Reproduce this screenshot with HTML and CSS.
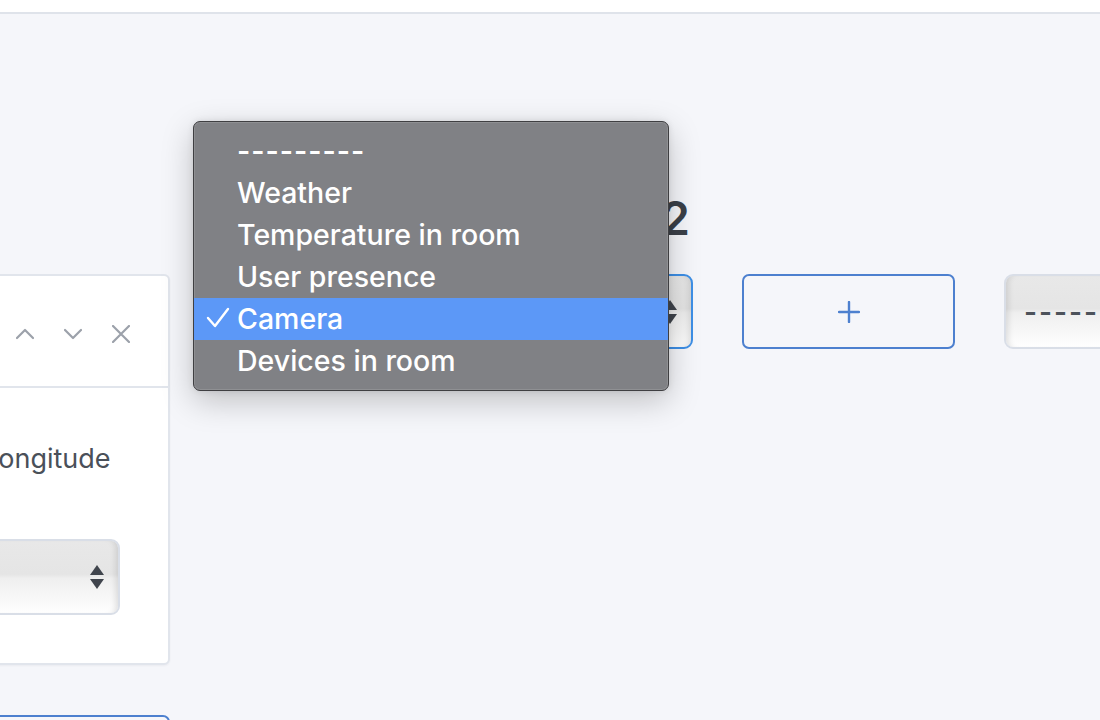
FILE: index.html
```html
<!DOCTYPE html>
<html lang="en">
<head>
<meta charset="utf-8">
<title>Dashboard layout</title>
<link rel="stylesheet" href="styles.css">
</head>
<body>
<header class="topbar"></header>
<main class="canvas">
  <div class="layout">
    <h2 class="col-title col-title-first">Column 1</h2>
    <h2 class="col-title col-title-second">Widget in column 2</h2>
    <div class="spacer"></div>
    <div class="spacer"></div>

    <section class="card">
      <div class="card-head">
        <span class="card-name">Weather</span>
        <div class="card-tools">
          <svg class="tool" viewBox="0 0 18 18" width="18" height="18"><polyline points="1,13 9,5 17,13" fill="none" stroke="currentColor" stroke-width="2.2" stroke-linecap="round" stroke-linejoin="round"/></svg>
          <svg class="tool" viewBox="0 0 18 18" width="18" height="18"><polyline points="1,5 9,13 17,5" fill="none" stroke="currentColor" stroke-width="2.2" stroke-linecap="round" stroke-linejoin="round"/></svg>
          <svg class="tool" viewBox="0 0 18 18" width="18" height="18"><path d="M1 1L17 17M17 1L1 17" fill="none" stroke="currentColor" stroke-width="2.2" stroke-linecap="round"/></svg>
        </div>
      </div>
      <div class="card-body">
        <div class="field">
          <label class="field-label">Latitude</label>
          <div class="select select-tall"><span class="select-value"></span><span class="arrows"><i class="up"></i><i class="down"></i></span></div>
        </div>
        <div class="field">
          <label class="field-label">Longitude</label>
          <div class="select select-tall"><span class="select-value"></span><span class="arrows"><i class="up"></i><i class="down"></i></span></div>
        </div>
      </div>
    </section>

    <div class="select select-focus"><span class="select-value">Camera</span><span class="arrows"><i class="up"></i><i class="down"></i></span></div>

    <button class="add-btn" type="button">
      <svg viewBox="0 0 22 22" width="22" height="22"><path d="M11 1V21M1 11H21" fill="none" stroke="currentColor" stroke-width="2.4" stroke-linecap="round"/></svg>
    </button>

    <div class="select"><span class="select-value dashes">---------</span><span class="arrows"><i class="up"></i><i class="down"></i></span></div>

    <button class="wide-btn" type="button">Add widget</button>
  </div>

  <div class="popup-menu">
    <div class="menu-item dashes">---------</div>
    <div class="menu-item">Weather</div>
    <div class="menu-item">Temperature in room</div>
    <div class="menu-item">User presence</div>
    <div class="menu-item selected"><svg class="check" viewBox="0 0 24 22" width="24" height="22"><polyline points="2,11 9,19 22,2" fill="none" stroke="#ffffff" stroke-width="2.4" stroke-linecap="round" stroke-linejoin="round"/></svg>Camera</div>
    <div class="menu-item">Devices in room</div>
  </div>
</main>
</body>
</html>
```
FILE: styles.css
```css
* { box-sizing: border-box; }

html, body {
  margin: 0;
  padding: 0;
  height: 100%;
  overflow: hidden;
}

body {
  font-family: Inter, "Noto Sans", "DejaVu Sans", sans-serif;
  background: #f5f6fa;
  color: #454b54;
}

.topbar {
  height: 14px;
  background: #ffffff;
  border-bottom: 2px solid #dfe3ea;
}

.canvas {
  position: relative;
  height: 706px;
  padding-top: 176px;
}

.layout {
  display: grid;
  grid-template-columns: 420px 474px 213px 300px;
  column-gap: 49px;
  margin-left: -250px;
  align-items: start;
}

.col-title {
  margin: 0 0 28px;
  font-size: 46px;
  line-height: 56px;
  font-weight: 600;
  color: #3b4048;
  white-space: nowrap;
}

.col-title-first { visibility: hidden; }

.col-title-second {
  text-align: right;
  padding-right: 3px;
}

/* card */
.card {
  background: #ffffff;
  border: 2px solid #e1e5ec;
  border-radius: 6px;
  box-shadow: 0 1px 2px rgba(30, 40, 60, 0.05);
}

.card-head {
  height: 112px;
  border-bottom: 2px solid #e1e5ec;
  display: flex;
  align-items: center;
  justify-content: space-between;
  padding: 6px 38px 0 30px;
}

.card-name {
  font-size: 28px;
  color: #454b54;
}

.card-tools {
  display: flex;
  gap: 30px;
  color: #9ca1aa;
}

.tool { display: block; }

.card-body {
  display: grid;
  grid-template-columns: 1fr 137px;
  column-gap: 40px;
  padding: 50px 48px 48px 30px;
}

.field-label {
  display: block;
  font-size: 27px;
  line-height: 42px;
  color: #4a5059;
  margin-bottom: 59px;
}

/* native-looking select */
.select {
  position: relative;
  height: 75px;
  border: 2px solid #d9dee7;
  border-radius: 9px;
  background: linear-gradient(#e8e8e8 0%, #e5e5e5 46%, #efefef 52%, #fbfbfb 90%, #ffffff 100%);
  box-shadow: inset 7px 0 6px -5px rgba(0, 0, 0, 0.12), inset -7px 0 6px -5px rgba(0, 0, 0, 0.12);
  display: flex;
  align-items: center;
  padding: 0 40px 0 18px;
}

.select-tall { height: 76px; }

.select-value {
  font-size: 28px;
  color: #4d535b;
  white-space: nowrap;
  overflow: hidden;
}

.select-value.dashes { letter-spacing: 2px; font-weight: 600; }

.arrows {
  position: absolute;
  right: 14px;
  top: 50%;
  transform: translateY(-50%);
  display: flex;
  flex-direction: column;
  gap: 4px;
}

.arrows i {
  display: block;
  width: 0;
  height: 0;
  border-left: 7px solid transparent;
  border-right: 7px solid transparent;
}

.arrows .up { border-bottom: 10px solid #40454d; }
.arrows .down { border-top: 10px solid #40454d; }

.select-focus {
  border-color: #3d8fe6;
}

/* buttons */
.add-btn {
  height: 75px;
  border: 2px solid #4d80cf;
  border-radius: 7px;
  background: transparent;
  color: #4d80cf;
  display: flex;
  align-items: center;
  justify-content: center;
  padding: 0;
}

.add-btn svg { display: block; }

.wide-btn {
  grid-column: 1;
  margin-top: 50px;
  height: 60px;
  border: 2px solid #4d80cf;
  border-radius: 7px;
  background: transparent;
  color: #4d80cf;
  font-family: inherit;
  font-size: 28px;
}

/* native popup menu */
.popup-menu {
  position: absolute;
  left: 193px;
  top: 107px;
  width: 476px;
  height: 270px;
  background: #808185;
  border: 1px solid #3f3f42;
  border-radius: 7px;
  box-shadow: inset 0 0 0 1px rgba(255, 255, 255, 0.12), 0 10px 32px rgba(0, 0, 0, 0.22), 0 0 6px rgba(0, 0, 0, 0.1);
  padding: 8px 0;
}

.menu-item {
  position: relative;
  height: 42px;
  line-height: 42px;
  padding-left: 43px;
  font-size: 28.5px;
  font-weight: 500;
  color: #ffffff;
  white-space: nowrap;
}

.menu-item.dashes { letter-spacing: 1px; font-weight: 600; }

.menu-item.selected {
  background: #5c98f7;
}

.check {
  position: absolute;
  left: 12px;
  top: 9px;
  display: block;
}
```
